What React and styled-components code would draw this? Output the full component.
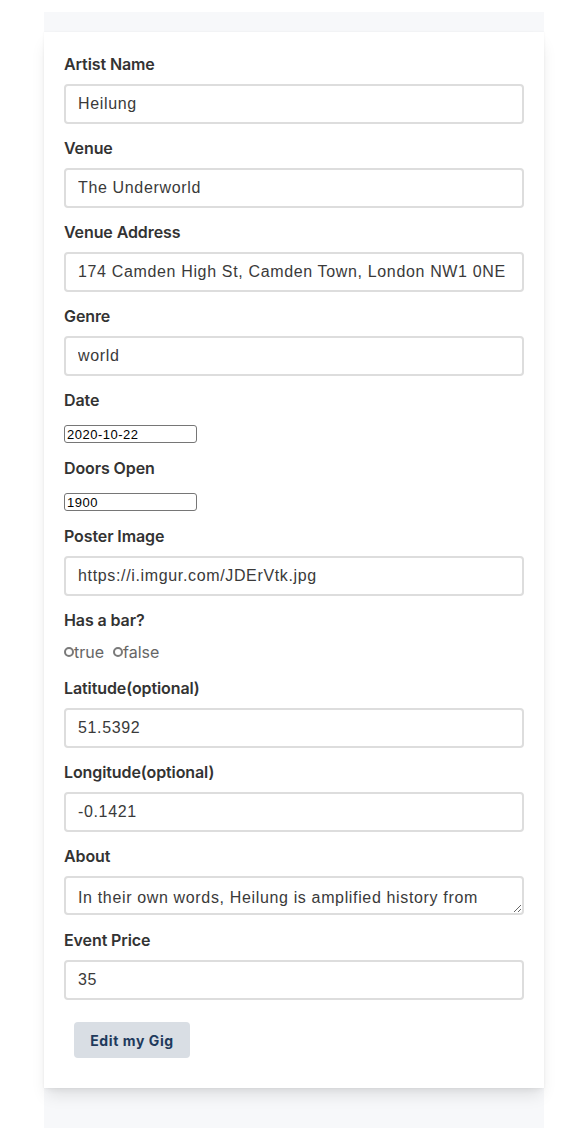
import React from "react";
import styled, { createGlobalStyle } from "styled-components";

const Global = createGlobalStyle`
  html, body { margin: 0; padding: 0; background: #fff; }
  body { font-family: Inter, "Liberation Sans", sans-serif; }
  * { box-sizing: border-box; }
`;

const Page = styled.div`
  width: 500px;
  margin: 12px auto 0;
  background: #f7f8fa;
  padding: 20px 0 40px;
`;

const Card = styled.form`
  background: #fff;
  padding: 22px 20px 30px;
  box-shadow: 0 10px 15px -3px rgba(0, 0, 0, 0.1), 0 4px 6px -2px rgba(0, 0, 0, 0.05),
    0 0 2px rgba(0, 0, 0, 0.06);
  display: flex;
  flex-direction: column;
`;

const Field = styled.div`
  display: flex;
  flex-direction: column;
  align-items: flex-start;
  margin-bottom: ${(p) => p.$mb ?? 14}px;
`;

const Label = styled.label`
  font-family: Inter, "Liberation Sans", sans-serif;
  font-weight: 600;
  font-size: 16px;
  line-height: 20px;
  color: #333;
  letter-spacing: -0.1px;
  margin-bottom: ${(p) => p.$mb ?? 10}px;
`;

const TextInput = styled.input`
  width: 100%;
  height: 40px;
  border: 2px solid #dddddd;
  border-radius: 4px;
  padding: 0 12px;
  font-family: "Liberation Sans", Arial, sans-serif;
  font-size: 16px;
  letter-spacing: 0.65px;
  color: #3a3a3a;
  background: #fff;
  outline: none;
`;

const SmallInput = styled.input`
  width: 133px;
  height: 18px;
  border: 1px solid #767676;
  border-radius: 3px;
  padding: 0 2px;
  font-family: "Liberation Sans", Arial, sans-serif;
  font-size: 13px;
  letter-spacing: 0.5px;
  color: #000;
  background: #fff;
`;

const TextArea = styled.textarea`
  width: 100%;
  height: 39px;
  border: 2px solid #dddddd;
  border-radius: 4px;
  padding: 10px 12px 0;
  font-family: "Liberation Sans", Arial, sans-serif;
  font-size: 16px;
  letter-spacing: 0.65px;
  line-height: 20px;
  color: #3a3a3a;
  resize: both;
  overflow: hidden;
  white-space: nowrap;
`;

const RadioRow = styled.div`
  display: flex;
  align-items: center;
  gap: 9px;
  height: 24px;
`;

const RadioLabel = styled.label`
  display: flex;
  align-items: center;
  font-family: Inter, "Liberation Sans", sans-serif;
  font-size: 16px;
  color: #666;
`;

const RadioDot = styled.span`
  width: 10px;
  height: 10px;
  border: 2px solid #7a7a7a;
  border-radius: 50%;
  display: inline-block;
`;

const Button = styled.button`
  align-self: flex-start;
  margin: 22px 0 0 10px;
  width: 116px;
  height: 36px;
  border: none;
  border-radius: 4px;
  background: #d9dee4;
  color: #1f3a5c;
  font-family: Inter, "Liberation Sans", sans-serif;
  font-weight: 700;
  font-size: 14px;
  letter-spacing: 0.6px;
`;

const textFields = [
  ["Artist Name", "Heilung"],
  ["Venue", "The Underworld"],
  ["Venue Address", "174 Camden High St, Camden Town, London NW1 0NE"],
  ["Genre", "world"],
];

export default function App() {
  return (
    <>
      <Global />
      <Page>
        <Card onSubmit={(e) => e.preventDefault()}>
          {textFields.map(([l, v]) => (
            <Field key={l}>
              <Label>{l}</Label>
              <TextInput defaultValue={v} />
            </Field>
          ))}
          <Field $mb={15}>
            <Label $mb={15}>Date</Label>
            <SmallInput defaultValue="2020-10-22" />
          </Field>
          <Field $mb={15}>
            <Label $mb={15}>Doors Open</Label>
            <SmallInput defaultValue="1900" />
          </Field>
          <Field>
            <Label>Poster Image</Label>
            <TextInput defaultValue="https://i.imgur.com/JDErVtk.jpg" />
          </Field>
          <Field $mb={14}>
            <Label $mb={10}>Has a bar?</Label>
            <RadioRow>
              <RadioLabel>
                <RadioDot />
                true
              </RadioLabel>
              <RadioLabel>
                <RadioDot />
                false
              </RadioLabel>
            </RadioRow>
          </Field>
          <Field>
            <Label>Latitude(optional)</Label>
            <TextInput defaultValue="51.5392" />
          </Field>
          <Field>
            <Label>Longitude(optional)</Label>
            <TextInput defaultValue="-0.1421" />
          </Field>
          <Field $mb={15}>
            <Label $mb={10}>About</Label>
            <TextArea
              rows={1}
              defaultValue="In their own words, Heilung is amplified history from"
            />
          </Field>
          <Field $mb={0}>
            <Label>Event Price</Label>
            <TextInput defaultValue="35" />
          </Field>
          <Button type="submit">Edit my Gig</Button>
        </Card>
      </Page>
    </>
  );
}
